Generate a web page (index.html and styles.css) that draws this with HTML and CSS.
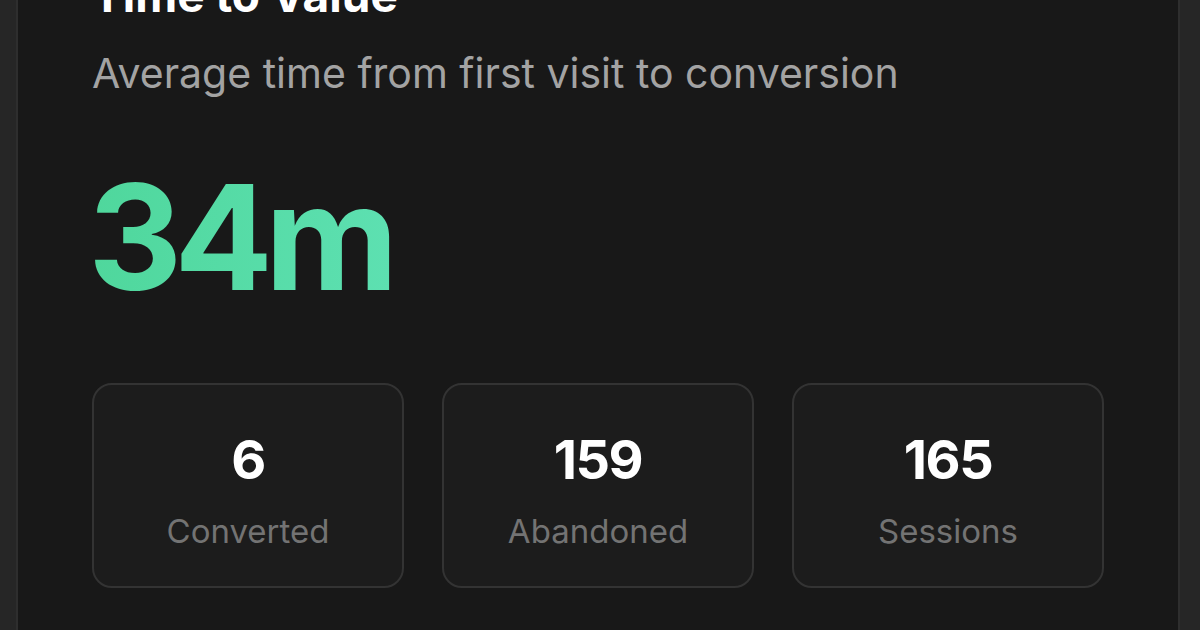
FILE: index.html
```html
<!DOCTYPE html>
<html lang="en">
<head>
<meta charset="utf-8">
<title>Time to Value</title>
<link rel="stylesheet" href="styles.css">
</head>
<body>
<section class="card">
  <h2 class="card-title">Time to Value</h2>
  <p class="card-subtitle">Average time from first visit to conversion</p>
  <div class="metric">34m</div>
  <div class="stats">
    <div class="stat">
      <div class="stat-value">6</div>
      <div class="stat-label">Converted</div>
    </div>
    <div class="stat">
      <div class="stat-value">159</div>
      <div class="stat-label">Abandoned</div>
    </div>
    <div class="stat">
      <div class="stat-value">165</div>
      <div class="stat-label">Sessions</div>
    </div>
  </div>
</section>
</body>
</html>
```

FILE: styles.css
```css
html, body {
  margin: 0;
  height: 100%;
}

body {
  background: #262626;
  padding: 0 20px 0 16px;
  overflow: hidden;
  font-family: Inter, "Noto Sans", sans-serif;
  color: #fff;
}

.card {
  background: #181818;
  border: 2px solid #2e2e2e;
  border-radius: 24px;
  margin-top: -58px;
  padding: 24px 74px 60px;
  min-height: 720px;
}

.card-title {
  margin: 0;
  font-size: 46px;
  font-weight: 700;
  line-height: 54px;
}

.card-subtitle {
  margin: 27px 0 0;
  font-size: 41px;
  line-height: 48px;
  color: #a3a3a3;
  font-weight: 400;
}

.metric {
  margin: 65px 0 0 -4px;
  font-size: 146px;
  font-weight: 700;
  line-height: 150px;
  letter-spacing: -8px;
  background: linear-gradient(90deg, #4fd79c, #5de0b1);
  -webkit-background-clip: text;
  background-clip: text;
  color: transparent;
  width: max-content;
}

.stats {
  display: grid;
  grid-template-columns: repeat(3, 1fr);
  gap: 38px;
  margin-top: 71px;
}

.stat {
  box-sizing: border-box;
  height: 205px;
  padding-top: 45px;
  background: #1c1c1c;
  border: 2px solid #333;
  border-radius: 20px;
  display: flex;
  flex-direction: column;
  align-items: center;
}

.stat-value {
  font-size: 54px;
  font-weight: 700;
  line-height: 60px;
  letter-spacing: -1.5px;
}

.stat-label {
  margin-top: 21px;
  font-size: 33px;
  line-height: 40px;
  color: #737373;
}
```
